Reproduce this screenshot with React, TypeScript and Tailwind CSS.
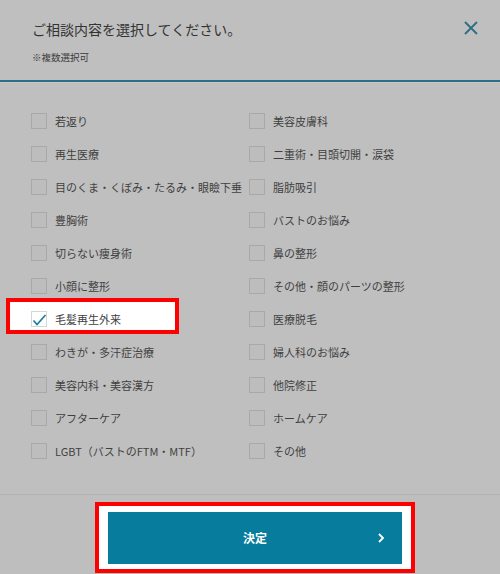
import React from "react";

const leftItems = [
  "若返り",
  "再生医療",
  "目のくま・くぼみ・たるみ・眼瞼下垂",
  "豊胸術",
  "切らない痩身術",
  "小顔に整形",
  "毛髪再生外来",
  "わきが・多汗症治療",
  "美容内科・美容漢方",
  "アフターケア",
  "LGBT（バストのFTM・MTF）",
];

const rightItems = [
  "美容皮膚科",
  "二重術・目頭切開・涙袋",
  "脂肪吸引",
  "バストのお悩み",
  "鼻の整形",
  "その他・顔のパーツの整形",
  "医療脱毛",
  "婦人科のお悩み",
  "他院修正",
  "ホームケア",
  "その他",
];

const font = { fontFamily: '"Noto Sans CJK JP", "Noto Sans", sans-serif' };

function Item({ label, checked }: { label: string; checked?: boolean }) {
  return (
    <div className="relative flex items-center gap-2 h-4">
      {checked && (
        <div className="absolute left-[-25px] top-[-13px] w-[173px] h-[36px] bg-white border-4 border-[#ff0000]" />
      )}
      <div
        className={`relative z-10 w-4 h-4 shrink-0 border ${
          checked ? "border-[#d6d6d6] bg-white" : "border-[#a9a9a9] bg-[#bdbdbd]"
        }`}
      >
        {checked && (
          <svg className="absolute left-[0px] top-[2px]" width="15" height="12" viewBox="0 0 15 12" fill="none">
            <path d="M1.5 6.5 L5 10.5 L13.5 1" stroke="#167a98" strokeWidth="1.6" />
          </svg>
        )}
      </div>
      <span className="relative z-10 text-[11px] leading-4 text-[#3f3f3f] whitespace-nowrap">{label}</span>
    </div>
  );
}

export default function App() {
  return (
    <div className="w-[500px] h-[574px] bg-[#bfbfbf] flex flex-col overflow-hidden" style={font}>
      {/* Header */}
      <div className="h-[80px] flex justify-between items-start pl-[32px] pr-[22px] pt-[20px]">
        <div>
          <div className="text-[14px] leading-[18px] text-[#333]">ご相談内容を選択してください。</div>
          <div className="mt-[13px] text-[9.5px] leading-3 text-[#3a3a3a]">※複数選択可</div>
        </div>
        <svg width="14" height="14" viewBox="0 0 14 14" fill="none" className="mt-[1px]">
          <path d="M1 1 L13 13 M13 1 L1 13" stroke="#2b6e85" strokeWidth="1.8" />
        </svg>
      </div>
      <div className="h-[2px] bg-[#2a6f86]" />
      <div className="h-px bg-[#c9c9c9]" />

      {/* Options */}
      <div className="flex-1 pl-[31px] pt-[30px]">
        <div className="grid grid-cols-[218px_218px] gap-y-[17px]">
          {leftItems.map((l, i) => (
            <React.Fragment key={l}>
              <Item label={l} checked={l === "毛髪再生外来"} />
              <Item label={rightItems[i]} />
            </React.Fragment>
          ))}
        </div>
      </div>

      {/* Footer */}
      <div className="h-[80px] border-t border-[#b2b2b2] bg-[#bebebe] pt-[7px]">
        <div className="ml-[95px] w-[320px] h-[71px] border-4 border-[#ff0000] bg-white px-[9px] pt-[6px] pb-[5px]">
          <button className="relative w-full h-full bg-[#087c9d] flex items-center justify-center">
            <span className="text-white text-[12px] font-bold">決定</span>
            <svg className="absolute right-[17px] top-1/2 -translate-y-1/2" width="8" height="10" viewBox="0 0 8 10" fill="none">
              <path d="M2 1 L6 5 L2 9" stroke="#fff" strokeWidth="1.8" />
            </svg>
          </button>
        </div>
      </div>
    </div>
  );
}
